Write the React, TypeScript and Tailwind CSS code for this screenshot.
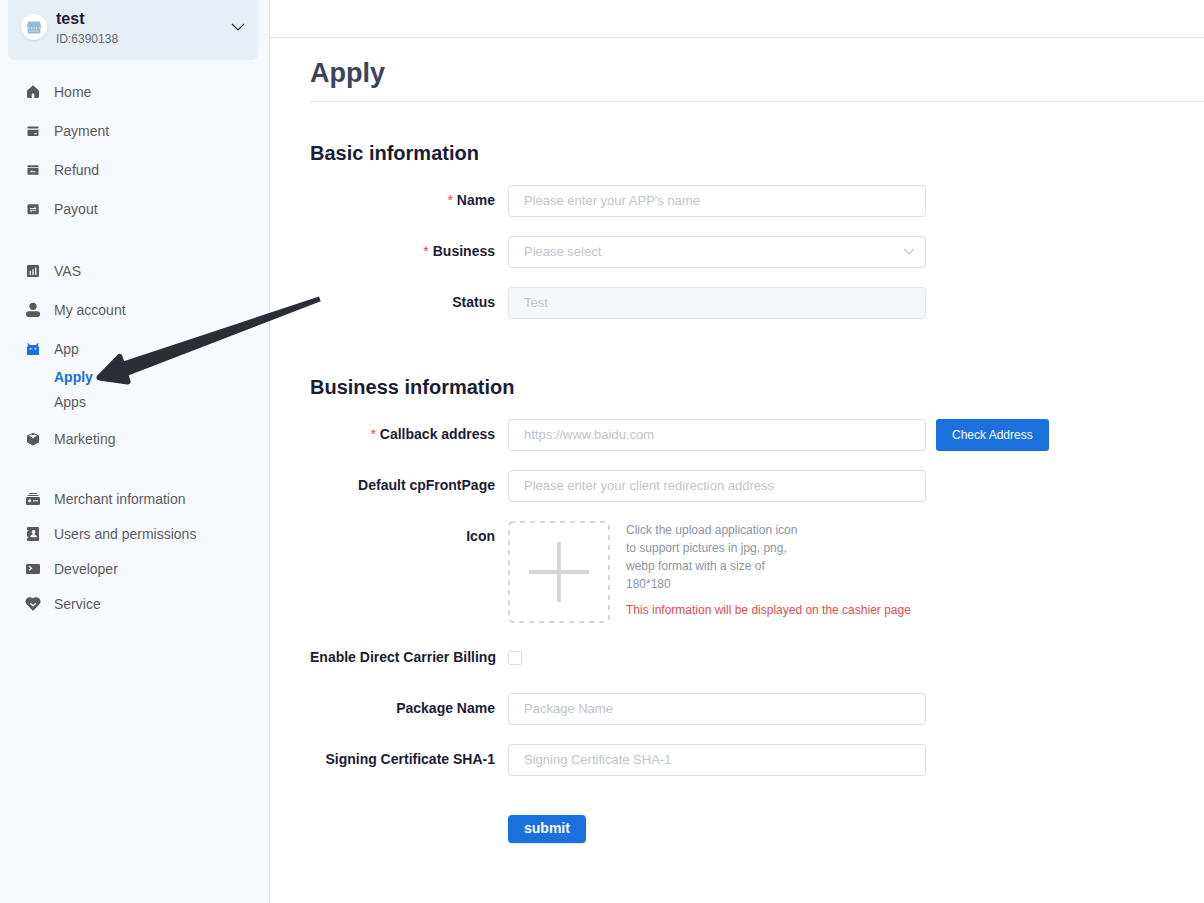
import React from 'react';

interface NavItemProps {
  icon: React.ReactNode;
  label: string;
  compact?: boolean;
  active?: boolean;
}

interface FieldRowProps {
  label: string;
  htmlFor: string;
  required?: boolean;
  children: React.ReactNode;
}

// All sidebar glyphs share a 16x16 box, "K" is the knocked-out colour
const K = '#f6f9fe';

const icons = {
  home: (
    <path d="M7.2 1.900a1.200 1.200 0 0 1 1.600 0l4.600 4.200c.4.300.6.800.6 1.300v5.200c0 .8-.5 1.400-1.300 1.400H9.300v-3.500c0-.6-.4-1-.9-1h-.8c-.5 0-.9.400-.9 1V14H3.300c-.8 0-1.300-.6-1.300-1.400V7.400c0-.5.200-1 .6-1.300z" />
  ),
  payment: (
    <>
      <path d="M3.300 3.500h9.400c.5 0 .8.400.8.900v1.200h-11V4.400c0-.5.300-.9.800-.9z" />
      <path d="M2.500 6.700h11v5.400c0 .5-.3.900-.8.900H3.300c-.5 0-.8-.4-.8-.9z" />
      <path d="M9.200 10.300h2.700v1H9.200z" fill={K} />
    </>
  ),
  refund: (
    <>
      <path d="M3.300 3.200h9.400c.5 0 .8.400.8.900v.8h-11v-.8c0-.5.300-.9.800-.9z" />
      <path d="M2.500 5.700h11v6.200c0 .5-.3.900-.8.900H3.300c-.5 0-.8-.4-.8-.9z" />
      <path d="M5.500 9.800h5M5.600 9.700l1.800-1.300" fill="none" stroke={K} strokeWidth="1" />
    </>
  ),
  payout: (
    <>
      <rect x="2.500" y="3.200" width="11.200" height="10" rx="1.200" />
      <path d="M5 7.500h6L9.300 5.800M11.200 9.300H5.100l1.800 1.700" fill="none" stroke={K} strokeWidth=".9" />
    </>
  ),
  vas: (
    <>
      <rect x="2" y="2" width="12" height="12" rx="1.200" />
      <path d="M5.300 8v4M8 6.300V12M10.800 4.500V12" fill="none" stroke={K} strokeWidth="1.300" />
    </>
  ),
  account: (
    <>
      <circle cx="8" cy="4.300" r="3.600" />
      <rect x="1" y="9.300" width="14" height="5.700" rx="2.800" />
    </>
  ),
  app: (
    <>
      <path d="M2.300 2.200h1.300l1.300 1.700h6.200l1.300-1.700h1.300l-.7 2.600c.6.500 1 1.300 1 2.100V14H2V6.900c0-.8.400-1.600 1-2.100z" />
      <path d="M4.800 7h1.500v1.500H4.800zM9.700 7h1.500v1.500H9.700z" fill={K} />
    </>
  ),
  marketing: (
    <>
      <path d="M8 1.700l6 2.800v6.800l-6 3.200-6-3.200V4.500z" />
      <path d="M6.500 3.400L8 4.200l1.500-.8 2.700 1.400L10 5.700 8 7.500 6 5.700l-2.200-.9z" fill={K} />
    </>
  ),
  merchant: (
    <>
      <path d="M4 2h8v1.100H4zM2.700 4h10.600v1.100H2.700z" />
      <rect x="1" y="6" width="14" height="8" rx="1.300" />
      <circle cx="4.600" cy="9.800" r="1.500" fill={K} />
      <path d="M8 9.300h5v1H8z" fill={K} />
    </>
  ),
  users: (
    <>
      <rect x="2" y="1" width="12" height="14" rx="1" />
      <path d="M1.500 4h1.800v1.200H1.500zM1.500 10.800h1.800V12H1.500z" fill={K} />
      <path d="M8.600 4a1.900 1.900 0 0 1 1 3.500v.9c1.300.3 2.200 1 2.200 2.100v.8H5.400v-.8c0-1.100.9-1.800 2.200-2.100v-.9A1.900 1.900 0 0 1 8.600 4z" fill={K} />
    </>
  ),
  developer: (
    <>
      <rect x="1" y="3" width="14" height="10" rx="1.200" />
      <path d="M4 5.300l2.500 1.900L4 9.200" fill="none" stroke={K} strokeWidth="1.300" />
    </>
  ),
  service: (
    <>
      <path d="M8 2.300C9.800.7 12.800.7 14.500 2.700c1.500 1.800 1.300 4.300-.3 5.900L8 15 1.800 8.600C.2 7 0 4.500 1.500 2.700 3.200.7 6.200.7 8 2.300z" />
      <path d="M5.200 7.200L8 9.700l2.800-2.500" fill="none" stroke={K} strokeWidth="1.400" />
    </>
  ),
};

const NavItem: React.FC<NavItemProps> = ({ icon, label, compact, active }) => (
  <li>
    <a href="#" className={`flex items-center gap-[13px] pl-[25px] ${compact ? 'h-[35px]' : 'h-[39px]'}`}>
      <svg viewBox="0 0 16 16" aria-hidden="true" className={`size-4 fill-current ${active ? 'text-[#1a71de]' : 'text-[#595959]'}`}>
        {icon}
      </svg>
      <span>{label}</span>
    </a>
  </li>
);

const Sidebar: React.FC = () => (
  <aside className="w-[270px] shrink-0 border-r border-[#dce4ec] bg-[#f6f9fe] text-sm text-[#5c5c5c]">
    <button type="button" className="mx-2 flex h-[60px] w-[250px] items-start rounded-b-md bg-[#e7eef6] px-[13px] pt-2 text-left">
      <span className="mt-[6px] flex size-[26px] items-center justify-center rounded-full bg-white shadow">
        <svg viewBox="0 0 14 13" aria-hidden="true" className="h-[13px] w-[14px]">
          <path d="M2 .5h10c.6 0 1 .4 1.100.9L14 5v1.500H0V5l.9-3.600C1 .9 1.400.5 2 .5z" fill="#93bbd6" />
          <path d="M.6 6h12.800v5.700c0 .5-.4.8-.8.8H1.400c-.4 0-.8-.3-.8-.8z" fill="#93bbd6" />
          <path d="M.8 6.400h1v3.400h10.400V6.400h1v1.200h-1v2.700H1.800V7.600h-1z" fill="#fff" />
          <path d="M4.200 6.500h1v1.200h-1zM6.700 6.500h1v1.200h-1zM9.200 6.500h1v1.200h-1z" fill="#fff" />
        </svg>
      </span>
      <span className="ml-[9px] flex-1">
        <span className="block text-base leading-[22px] font-bold text-[#1a1d33]">test</span>
        <span className="block text-xs leading-[18px] text-[#66696e]">ID:6390138</span>
      </span>
      <svg viewBox="0 0 14 8" aria-hidden="true" className="mt-[15px] h-2 w-[14px]">
        <path d="M1 1l6 6 6-6" fill="none" stroke="#1f2638" strokeWidth="1.100" />
      </svg>
    </button>

    <nav className="pt-3">
      <ul>
        <NavItem icon={icons.home} label="Home" />
        <NavItem icon={icons.payment} label="Payment" />
        <NavItem icon={icons.refund} label="Refund" />
        <NavItem icon={icons.payout} label="Payout" />
      </ul>
      <ul className="mt-[23px]">
        <NavItem icon={icons.vas} label="VAS" />
        <NavItem icon={icons.account} label="My account" />
        <NavItem icon={icons.app} label="App" active />
        <li className="-mt-[3px] mb-1">
          <ul className="pl-[54px] leading-[25px]">
            <li><a href="#" className="font-bold text-[#1a6fdb]">Apply</a></li>
            <li><a href="#">Apps</a></li>
          </ul>
        </li>
        <NavItem icon={icons.marketing} label="Marketing" />
      </ul>
      <ul className="mt-[23px]">
        <NavItem icon={icons.merchant} label="Merchant information" compact />
        <NavItem icon={icons.users} label="Users and permissions" compact />
        <NavItem icon={icons.developer} label="Developer" compact />
        <NavItem icon={icons.service} label="Service" compact />
      </ul>
    </nav>
  </aside>
);

const FieldRow: React.FC<FieldRowProps> = ({ label, htmlFor, required, children }) => (
  <div className="flex items-start">
    <label htmlFor={htmlFor} className="w-[198px] shrink-0 pr-[13px] text-right text-sm leading-[30px] font-bold whitespace-nowrap text-[#1a1d33]">
      {required && <span className="mr-1 font-normal text-[#e84749]">*</span>}
      {label}
    </label>
    {children}
  </div>
);

const inputClass =
  'h-8 w-full max-w-[418px] min-w-0 rounded border border-[#dcdfe3] bg-white px-[15px] pb-[2px] text-[13px] text-[#606266] placeholder:text-[#c0c4cc] outline-none focus:border-[#1a71de]';

const ApplyForm: React.FC = () => (
  <form onSubmit={(e) => e.preventDefault()}>
    <section className="mt-9">
      <h2 className="mb-[17px] text-xl leading-[30px] font-bold text-[#1a1d33]">Basic information</h2>
      <div className="space-y-[19px]">
        <FieldRow label="Name" htmlFor="name" required>
          <input id="name" type="text" placeholder="Please enter your APP's name" className={inputClass} />
        </FieldRow>
        <FieldRow label="Business" htmlFor="business" required>
          <div className="relative w-full max-w-[418px]">
            <select id="business" defaultValue="" className="h-8 w-full appearance-none rounded border border-[#dcdfe3] bg-white px-[15px] text-[13px] text-[#c0c4cc] outline-none">
              <option value="">Please select</option>
            </select>
            <svg viewBox="0 0 12 8" aria-hidden="true" className="pointer-events-none absolute top-3 right-[11px] h-2 w-3">
              <path d="M1 1l5 5 5-5" fill="none" stroke="#c0c4cc" strokeWidth="1.200" />
            </svg>
          </div>
        </FieldRow>
        <FieldRow label="Status" htmlFor="status">
          <input id="status" type="text" defaultValue="Test" disabled className="h-8 w-full max-w-[418px] rounded border border-[#dfe4ed] bg-[#f5f7fb] px-[15px] pb-[2px] text-[13px] text-[#c0c4cc]" />
        </FieldRow>
      </div>
    </section>

    <section className="mt-[53px]">
      <h2 className="mb-[17px] text-xl leading-[30px] font-bold text-[#1a1d33]">Business information</h2>
      <div className="space-y-[19px]">
        <FieldRow label="Callback address" htmlFor="callback" required>
          <input id="callback" type="text" placeholder="https://www.baidu.com" className={inputClass} />
          <button type="button" className="ml-[10px] h-8 shrink-0 rounded-[3px] bg-[#1a71de] px-4 text-xs text-white">
            Check Address
          </button>
        </FieldRow>
        <FieldRow label="Default cpFrontPage" htmlFor="front-page">
          <input id="front-page" type="text" placeholder="Please enter your client redirection address" className={inputClass} />
        </FieldRow>
        <FieldRow label="Icon" htmlFor="icon">
          <label htmlFor="icon" className="size-[102px] shrink-0 cursor-pointer">
            <svg viewBox="0 0 102 102" aria-hidden="true" className="size-full">
              <rect x="1" y="1" width="100" height="100" rx="4" fill="none" stroke="#d0d9de" strokeWidth="2" strokeDasharray="5 5" strokeDashoffset="3" />
              <path d="M51 21v60M21 51h60" stroke="#d6d6d6" strokeWidth="4" />
            </svg>
            <input id="icon" type="file" accept=".jpg,.png,.webp" className="sr-only" />
          </label>
          <div className="ml-4 text-xs leading-[18px] text-[#8b94a3]">
            <p className="max-w-[180px]">
              Click the upload application icon to support pictures in jpg, png, webp format with a size of 180*180
            </p>
            <p className="mt-2 text-[#dd4f4d]">This information will be displayed on the cashier page</p>
          </div>
        </FieldRow>
        <FieldRow label="Enable Direct Carrier Billing" htmlFor="billing">
          <div className="flex h-8 items-center">
            <input id="billing" type="checkbox" className="size-[14px] appearance-none rounded-xs border border-[#dcdfe3] bg-white checked:bg-[#1a71de]" />
          </div>
        </FieldRow>
        <FieldRow label="Package Name" htmlFor="package">
          <input id="package" type="text" placeholder="Package Name" className={inputClass} />
        </FieldRow>
        <FieldRow label="Signing Certificate SHA-1" htmlFor="sha">
          <input id="sha" type="text" placeholder="Signing Certificate SHA-1" className={inputClass} />
        </FieldRow>
      </div>
    </section>

    <button type="submit" className="mt-[39px] ml-[198px] h-7 rounded bg-[#1a71de] px-4 pb-[2px] text-sm font-bold text-white shadow-sm">
      submit
    </button>
  </form>
);

const App: React.FC = () => {
  return (
    <div className="relative flex min-h-screen bg-white font-['Liberation_Sans',Arial,sans-serif]">
      <Sidebar />
      <main className="min-w-0 flex-1">
        <div className="h-[38px] border-b border-[#e0e5ea]" />
        <div className="pb-[60px] pl-10">
          <h1 className="h-16 border-b border-[#e3e6ea] pt-[15px] text-[27px] leading-[40px] font-bold text-[#3d4459]">Apply</h1>
          <ApplyForm />
        </div>
      </main>

      {/* pointer to the Apply menu entry */}
      <svg viewBox="0 0 230 94" aria-hidden="true" className="pointer-events-none absolute top-[294px] left-[94px] h-[94px] w-[230px]">
        <path d="M29 67.500L225 2.500l1.700 4.700L33 82z" fill="#2b2e36" />
        <path d="M5.500 83.500l20-20.500 8 24.500z" fill="#2b2e36" stroke="#2b2e36" strokeWidth="6" strokeLinejoin="round" />
      </svg>
    </div>
  );
};

export default App;
